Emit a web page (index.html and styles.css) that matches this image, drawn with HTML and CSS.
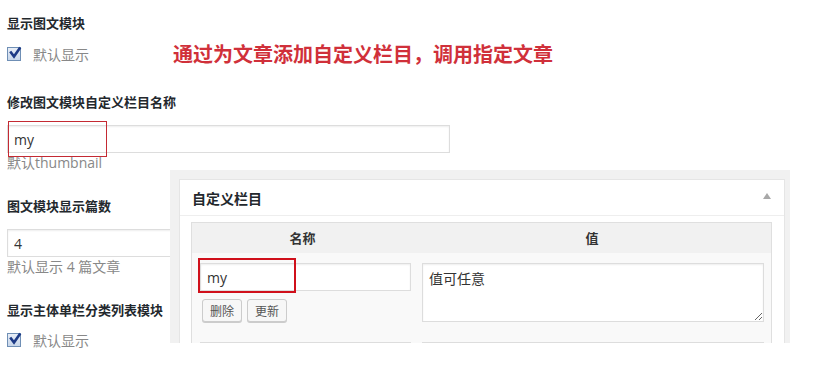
FILE: index.html
```html
<!DOCTYPE html>
<html lang="zh-CN">
<head>
<meta charset="utf-8">
<title>图文模块设置</title>
<link rel="stylesheet" href="styles.css">
</head>
<body>
<div class="page">
  <section class="opt">
    <h4 class="label label-check">显示图文模块</h4>
    <div class="check-row">
      <span class="cb"><svg viewBox="0 0 14 14" width="14" height="14"><path d="M3 6.5 L6 10.5 L11.5 2.5" fill="none" stroke="#1d3a86" stroke-width="2.6" stroke-linecap="square"/></svg></span>
      <span class="cb-text">默认显示</span>
      <span class="note">通过为文章添加自定义栏目，调用指定文章</span>
    </div>
  </section>

  <section class="opt">
    <h4 class="label">修改图文模块自定义栏目名称</h4>
    <div class="field">
      <input class="text" type="text" value="my">
      <span class="mark mark-thin"></span>
    </div>
    <p class="desc">默认thumbnail</p>
  </section>

  <section class="opt">
    <h4 class="label">图文模块显示篇数</h4>
    <div class="field">
      <input class="text" type="text" value="4">
    </div>
    <p class="desc">默认显示 4 篇文章</p>
  </section>

  <section class="opt">
    <h4 class="label label-check">显示主体单栏分类列表模块</h4>
    <div class="check-row">
      <span class="cb"><svg viewBox="0 0 14 14" width="14" height="14"><path d="M3 6.5 L6 10.5 L11.5 2.5" fill="none" stroke="#1d3a86" stroke-width="2.6" stroke-linecap="square"/></svg></span>
      <span class="cb-text">默认显示</span>
    </div>
  </section>

  <aside class="metabox">
    <div class="postbox">
      <div class="postbox-head">
        <h3 class="postbox-title">自定义栏目</h3>
        <span class="toggle"></span>
      </div>
      <div class="inside">
        <div class="meta-table">
          <div class="th">名称</div>
          <div class="th">值</div>
          <div class="td td-key">
            <div class="key-wrap">
              <input class="text key" type="text" value="my">
              <span class="mark mark-thick"></span>
            </div>
            <div class="btns">
              <button class="btn" type="button">删除</button>
              <button class="btn" type="button">更新</button>
            </div>
          </div>
          <div class="td td-val">
            <textarea class="val">值可任意</textarea>
          </div>
          <div class="td td-key">
            <input class="text key" type="text" value="">
          </div>
          <div class="td td-val">
            <textarea class="val"></textarea>
          </div>
        </div>
      </div>
    </div>
  </aside>
</div>
</body>
</html>
```

FILE: styles.css
```css
html, body {
  margin: 0;
  padding: 0;
  background: #fff;
  overflow: hidden;
}

body {
  font-family: "Open Sans", "Noto Sans CJK SC", sans-serif;
  color: #333;
}

.page {
  position: relative;
  width: 830px;
  height: 368px;
  padding: 14px 0 0 7px;
  box-sizing: border-box;
}

.opt {
  margin: 0 0 24px;
}

.opt:first-child {
  margin-bottom: 29px;
}

.label {
  margin: 0 0 14px;
  font-family: "Noto Sans CJK SC", sans-serif;
  font-size: 13px;
  line-height: 18px;
  font-weight: 700;
  color: #23282d;
}

.label-check {
  margin-bottom: 12px;
}

.opt:nth-child(4) .label-check {
  margin-bottom: 11px;
}

.check-row {
  display: flex;
  align-items: center;
  height: 20px;
}

.cb {
  width: 12px;
  height: 12px;
  border: 1px solid #6f8fb5;
  background: linear-gradient(#e8eef7, #c7d6ea);
  display: flex;
  align-items: center;
  justify-content: center;
  position: relative;
}

.cb svg {
  position: absolute;
  left: 0;
  top: -2px;
}

.cb-text {
  margin-left: 12px;
  font-family: "Noto Sans CJK SC", sans-serif;
  font-size: 14px;
  line-height: 20px;
  color: #888;
}

.note {
  margin-left: 84px;
  font-family: "Noto Sans CJK SC", sans-serif;
  font-size: 20px;
  line-height: 20px;
  font-weight: 700;
  color: #d0303a;
}

.field {
  position: relative;
  width: 443px;
}

.text {
  display: block;
  box-sizing: border-box;
  width: 100%;
  height: 28px;
  margin: 0;
  padding: 0 6px;
  border: 1px solid #ddd;
  box-shadow: inset 0 1px 2px rgba(0, 0, 0, 0.07);
  background: #fff;
  font-family: "Open Sans", "Noto Sans CJK SC", sans-serif;
  font-size: 14px;
  color: #333;
  outline: none;
}

.desc {
  margin: 0;
  font-family: "Open Sans", "Noto Sans CJK SC", sans-serif;
  font-size: 14px;
  line-height: 20px;
  color: #888;
}

.mark {
  position: absolute;
  box-sizing: border-box;
  pointer-events: none;
}

.mark-thin {
  left: 1px;
  top: -4px;
  width: 99px;
  height: 36px;
  border: 1px solid #c42a33;
}

.mark-thick {
  left: -2px;
  top: -5px;
  width: 98px;
  height: 35px;
  border: 2px solid #d0101b;
}

/* overlaid screenshot panel */
.metabox {
  position: absolute;
  left: 170px;
  top: 170px;
  width: 620px;
  height: 173px;
  box-sizing: border-box;
  padding: 9px 5px 0 9px;
  background: #f1f1f1;
  overflow: hidden;
}

.postbox {
  background: #fff;
  border: 1px solid #e5e5e5;
  border-bottom: none;
  height: 200px;
}

.postbox-head {
  display: flex;
  align-items: center;
  justify-content: space-between;
  height: 35px;
  padding: 0 13px 0 12px;
  border-bottom: 1px solid #eee;
}

.postbox-title {
  margin: 0;
  font-family: "Noto Sans CJK SC", sans-serif;
  font-size: 14px;
  line-height: 18px;
  font-weight: 700;
  color: #23282d;
}

.toggle {
  width: 0;
  height: 0;
  border-left: 4px solid transparent;
  border-right: 4px solid transparent;
  border-bottom: 6px solid #a8a8a8;
  margin-top: -3px;
}

.inside {
  padding: 6px 12px 0 11px;
}

.meta-table {
  display: grid;
  grid-template-columns: 221px 1fr;
  border: 1px solid #dfdfdf;
  background: #f9f9f9;
}

.th {
  height: 30px;
  background: #f1f1f1;
  font-family: "Noto Sans CJK SC", sans-serif;
  font-size: 13px;
  line-height: 30px;
  font-weight: 700;
  color: #333;
  text-align: center;
}

.td-key {
  padding: 10px 2px 0 8px;
}

.td-val {
  padding: 10px 7px 10px 9px;
}

.key-wrap {
  position: relative;
}

.key {
  width: 211px;
}

.btns {
  display: flex;
  gap: 5px;
  margin: 8px 0 0 2px;
}

.btn {
  height: 23px;
  padding: 0 7px;
  border: 1px solid #ccc;
  border-radius: 3px;
  background: #f7f7f7;
  box-shadow: 0 1px 0 #ccc;
  font-family: "Noto Sans CJK SC", sans-serif;
  font-size: 12px;
  line-height: 21px;
  color: #555;
}

.val {
  display: block;
  box-sizing: border-box;
  width: 100%;
  height: 59px;
  margin: 0;
  padding: 4px 6px;
  border: 1px solid #ddd;
  box-shadow: inset 0 1px 2px rgba(0, 0, 0, 0.07);
  background: #fff;
  font-family: "Noto Sans CJK SC", sans-serif;
  font-size: 14px;
  line-height: 20px;
  color: #333;
  outline: none;
}
```
